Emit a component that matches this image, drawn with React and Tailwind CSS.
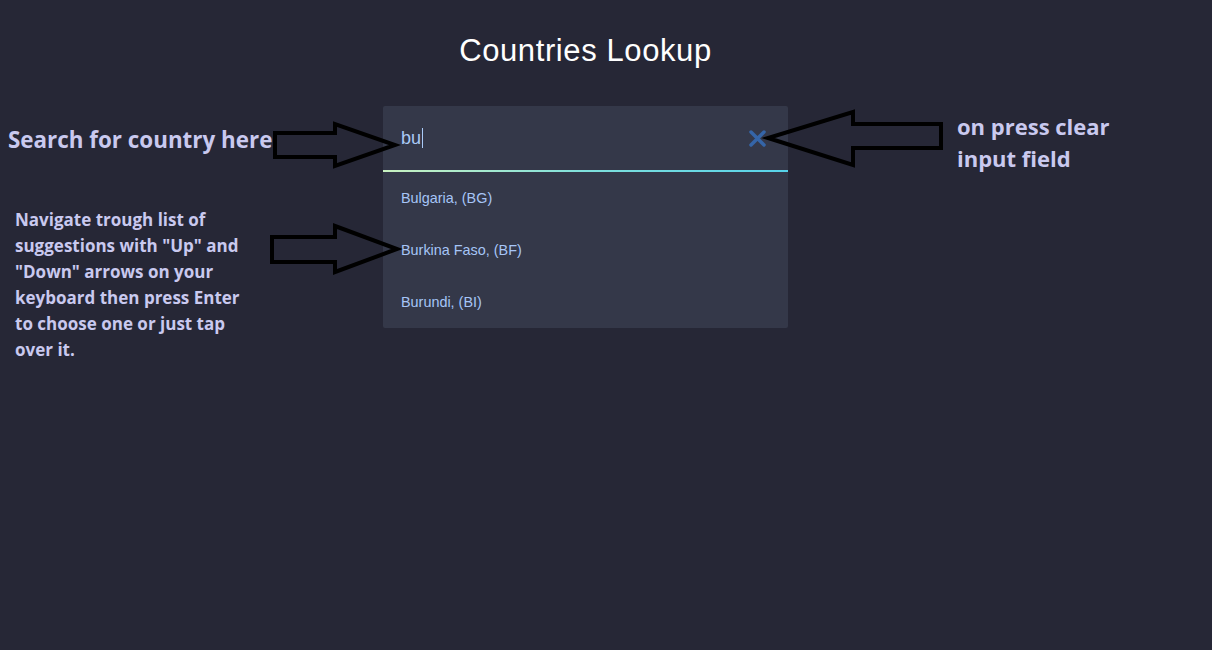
import React from "react";

const annot = { fontFamily: "'Open Sans', Lato, sans-serif" };

function Arrows() {
  return (
    <svg
      className="pointer-events-none absolute left-0 top-0"
      width="1212"
      height="650"
      viewBox="0 0 1212 650"
      fill="none"
    >
      <path
        d="M275 133 L335 133 L335 124 L395 145 L335 166 L335 157 L275 157 Z"
        stroke="#000"
        strokeWidth="4"
        strokeLinejoin="miter"
      />
      <path
        d="M272 237 L335 237 L335 226 L397 249 L335 272 L335 262 L272 262 Z"
        stroke="#000"
        strokeWidth="4"
        strokeLinejoin="miter"
      />
      <path
        d="M941 124 L853 124 L853 112 L768 138 L853 165 L853 148 L941 148 Z"
        stroke="#000"
        strokeWidth="4"
        strokeLinejoin="miter"
      />
    </svg>
  );
}

export default function App() {
  const items = ["Bulgaria, (BG)", "Burkina Faso, (BF)", "Burundi, (BI)"];
  return (
    <div className="relative h-[650px] w-full overflow-hidden bg-[#262736]">
      <div className="flex">
        <div className="w-[383px] shrink-0" style={annot}>
          <div className="mt-[125px] whitespace-nowrap pl-[8px] text-[22.4px] font-bold leading-[30px] text-[#c9c9ef]">
            Search for country here
          </div>
          <div className="mt-[52px] whitespace-nowrap pl-[15px] text-[17px] font-bold leading-[26px] text-[#c9c9ef]">
            Navigate trough list of
            <br />
            suggestions with "Up" and
            <br />
            "Down" arrows on your
            <br />
            keyboard then press Enter
            <br />
            to choose one or just tap
            <br />
            over it.
          </div>
        </div>
        <div className="w-[405px] shrink-0" style={{ fontFamily: "'Liberation Sans', Arial, sans-serif" }}>
          <h1 className="mt-[35px] text-center text-[31px] leading-[32px] tracking-[0.6px] text-white">
            Countries Lookup
          </h1>
          <div className="mt-[39px] rounded-[2px] bg-[#343849]">
            <div className="flex h-[64px] items-center justify-between pl-[18px] pr-[22px]">
              <div className="flex items-center text-[18px] text-[#aacaf7]">
                <span>bu</span>
                <span className="ml-[1px] h-[20px] w-[1px] bg-[#aacaf7]" />
              </div>
              <svg width="17" height="17" viewBox="0 0 17 17">
                <path d="M2 2 L15 15 M15 2 L2 15" stroke="#3565a8" strokeWidth="3.5" strokeLinecap="round" />
              </svg>
            </div>
            <div className="h-[2px] bg-gradient-to-r from-[#c8f2c0] via-[#7ee0dc] to-[#56d3ea]" />
            {items.map((t) => (
              <div key={t} className="flex h-[52px] items-center pl-[18px] pt-[2px] text-[14.4px] text-[#a6c5f7]">
                {t}
              </div>
            ))}
          </div>
        </div>
        <div className="shrink-0 pl-[169px]" style={annot}>
          <div className="mt-[110px] whitespace-nowrap text-[22px] font-bold leading-[32px] text-[#c9c9ef]">
            on press clear
            <br />
            input field
          </div>
        </div>
      </div>
      <Arrows />
    </div>
  );
}
